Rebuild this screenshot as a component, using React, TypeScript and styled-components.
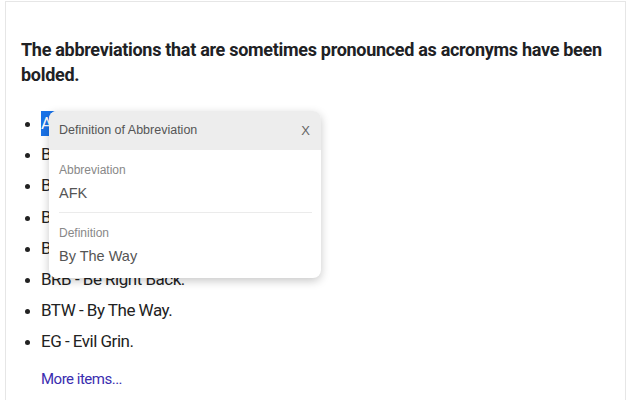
import React from 'react';
import styled, {createGlobalStyle} from 'styled-components';

const items = [
    'AFK - Away From Keyboard.',
    'BAK - Back At Keyboard.',
    'BBL - Be Back Later.',
    'BFN - Bye For Now.',
    'BIF - Before I Forget.',
    'BRB - Be Right Back.',
    'BTW - By The Way.',
    'EG - Evil Grin.',
];

const GlobalStyle = createGlobalStyle`
    html, body {
        margin: 0;
        background: #ffffff;
        font-family: Roboto, "Liberation Sans", sans-serif;
    }
`;

export default function App() {
    return <>
        <GlobalStyle/>
        <Page>
            <Card>
                <Heading>The abbreviations that are sometimes pronounced as acronyms have been bolded.</Heading>
                <List>
                    {items.map((text, i) => i === 0
                        ? <Item key={text}>
                            <Selected>AFK</Selected> - Away From Keyboard.
                            <Popup>
                                <PopupHeader>
                                    <span>Definition of Abbreviation</span>
                                    <Close>X</Close>
                                </PopupHeader>
                                <PopupBody>
                                    <Field>
                                        <Label>Abbreviation</Label>
                                        <Value>AFK</Value>
                                    </Field>
                                    <Field $last>
                                        <Label>Definition</Label>
                                        <Value>By The Way</Value>
                                    </Field>
                                </PopupBody>
                            </Popup>
                        </Item>
                        : <Item key={text}>{text}</Item>)}
                </List>
                <More href="#">More items...</More>
            </Card>
        </Page>
    </>;
}

const Page = styled.div`
    height: 400px;
    overflow: hidden;
    padding: 1px 14px 0 5px;
`;

const Card = styled.div`
    border: 1px solid #e6e6e6;
    border-bottom: none;
    padding: 35px 15px 40px;
    min-height: 420px;
`;

const Heading = styled.h2`
    margin: 0 0 21px;
    font-size: 18px;
    line-height: 25px;
    font-weight: 700;
    color: #202124;
    letter-spacing: -0.3px;
`;

const List = styled.ul`
    margin: 0;
    padding: 0 0 0 20px;
    list-style: disc;
`;

const Item = styled.li`
    position: relative;
    font-size: 17px;
    line-height: 31.2px;
    color: #222;
    letter-spacing: -0.5px;
    &::marker {
        font-size: 15px;
    }
`;

const Selected = styled.span`
    padding: 2px 0 3px;
    background: #1a73e8;
    color: #fff;
`;

const More = styled.a`
    display: block;
    margin: 12px 0 0 20px;
    font-size: 15px;
    letter-spacing: -0.5px;
    color: #3a2db0;
    text-decoration: none;
`;

const Popup = styled.div`
    position: absolute;
    top: 3px;
    left: 8px;
    width: 272px;
    background: #fff;
    border-radius: 8px;
    overflow: hidden;
    box-shadow: 0 3px 10px rgba(0, 0, 0, 0.22);
    font-family: "Liberation Sans", Arial, sans-serif;
    letter-spacing: 0;
    z-index: 2;
`;

const PopupHeader = styled.div`
    display: flex;
    justify-content: space-between;
    align-items: center;
    height: 39px;
    padding: 0 11px 0 10px;
    background: #ededed;
    font-size: 12.5px;
    color: #555;
    line-height: 1;
`;

const Close = styled.span`
    font-size: 13px;
    color: #666;
`;

const PopupBody = styled.div`
    padding: 10px 9px 9px 10px;
`;

const Field = styled.div<{$last?: boolean}>`
    padding: 2px 0 ${p => p.$last ? '4px' : '10px'};
    border-bottom: ${p => p.$last ? 'none' : '1px solid #ebebeb'};
    margin-bottom: ${p => p.$last ? '0' : '10px'};
`;

const Label = styled.div`
    font-size: 12px;
    line-height: 16px;
    color: #888;
`;

const Value = styled.div`
    margin-top: 6px;
    font-size: 14.5px;
    line-height: 18px;
    color: #555;
`;
